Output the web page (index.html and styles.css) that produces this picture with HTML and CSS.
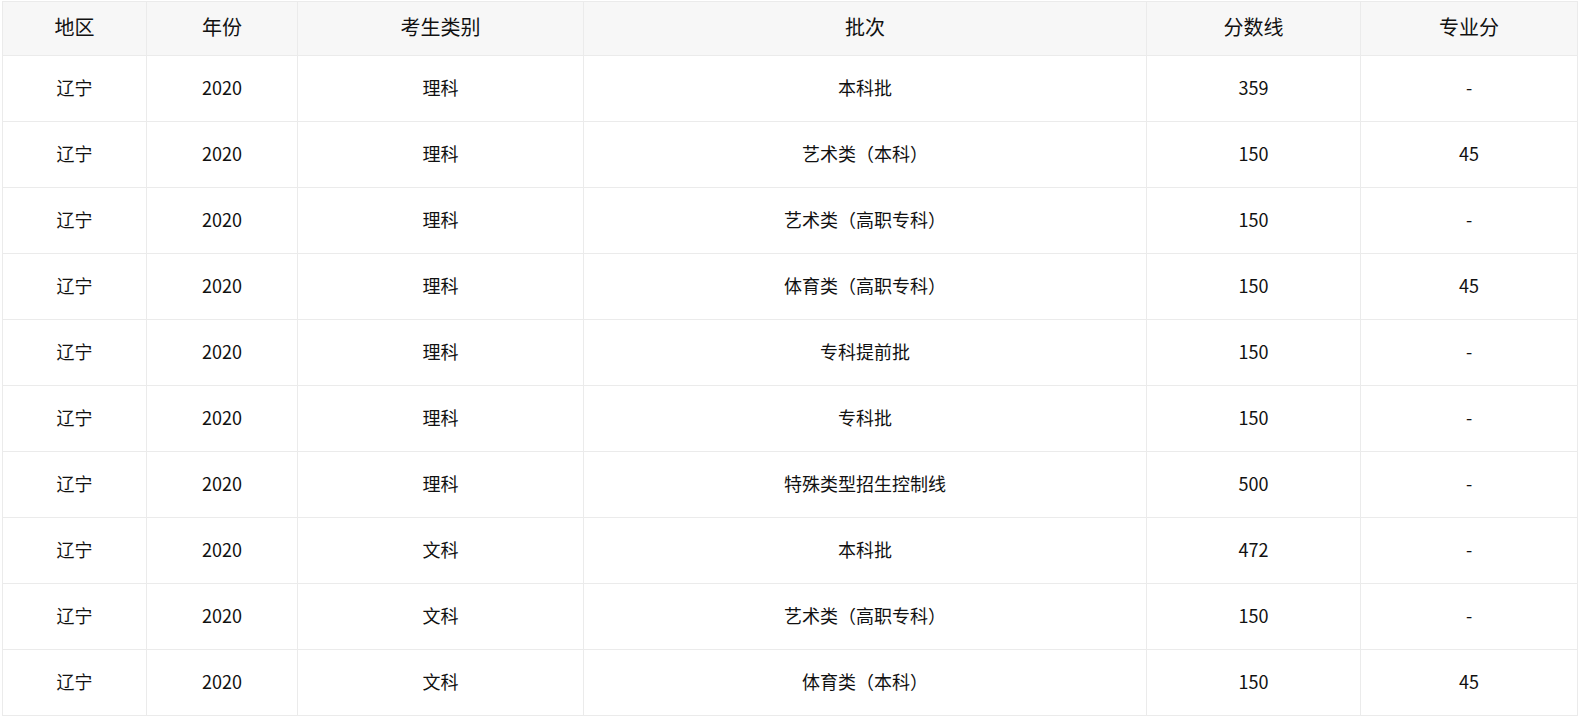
FILE: index.html
```html
<!DOCTYPE html>
<html lang="zh">
<head>
<meta charset="utf-8">
<title>分数线</title>
<link rel="stylesheet" href="styles.css">
</head>
<body>
<div class="wrap">
<table class="score-table">
  <colgroup>
    <col class="c1"><col class="c2"><col class="c3"><col class="c4"><col class="c5"><col class="c6">
  </colgroup>
  <thead>
    <tr><th>地区</th><th>年份</th><th>考生类别</th><th>批次</th><th>分数线</th><th>专业分</th></tr>
  </thead>
  <tbody>
    <tr><td>辽宁</td><td>2020</td><td>理科</td><td>本科批</td><td>359</td><td>-</td></tr>
    <tr><td>辽宁</td><td>2020</td><td>理科</td><td>艺术类（本科）</td><td>150</td><td>45</td></tr>
    <tr><td>辽宁</td><td>2020</td><td>理科</td><td>艺术类（高职专科）</td><td>150</td><td>-</td></tr>
    <tr><td>辽宁</td><td>2020</td><td>理科</td><td>体育类（高职专科）</td><td>150</td><td>45</td></tr>
    <tr><td>辽宁</td><td>2020</td><td>理科</td><td>专科提前批</td><td>150</td><td>-</td></tr>
    <tr><td>辽宁</td><td>2020</td><td>理科</td><td>专科批</td><td>150</td><td>-</td></tr>
    <tr><td>辽宁</td><td>2020</td><td>理科</td><td>特殊类型招生控制线</td><td>500</td><td>-</td></tr>
    <tr><td>辽宁</td><td>2020</td><td>文科</td><td>本科批</td><td>472</td><td>-</td></tr>
    <tr><td>辽宁</td><td>2020</td><td>文科</td><td>艺术类（高职专科）</td><td>150</td><td>-</td></tr>
    <tr><td>辽宁</td><td>2020</td><td>文科</td><td>体育类（本科）</td><td>150</td><td>45</td></tr>
  </tbody>
</table>
</div>
</body>
</html>
```
FILE: styles.css
```css
html, body {
  margin: 0;
  padding: 0;
  background: #fff;
}
.wrap {
  padding: 1px 0 0 2px;
}
.score-table {
  border-collapse: collapse;
  table-layout: fixed;
  width: 1575px;
  font-family: "Noto Sans CJK SC", "Noto Sans", sans-serif;
  color: #111;
}
.c1 { width: 144px; }
.c2 { width: 151px; }
.c3 { width: 286px; }
.c4 { width: 563px; }
.c5 { width: 214px; }
.c6 { width: 217px; }
.score-table th,
.score-table td {
  border: 1px solid #ebebeb;
  text-align: center;
  vertical-align: middle;
  padding: 0 0 3px;
  line-height: 1;
}
.score-table th {
  background: #f7f7f7;
  font-weight: normal;
  font-size: 20px;
  height: 50px;
}
.score-table td {
  font-size: 18px;
  height: 62px;
}
```
